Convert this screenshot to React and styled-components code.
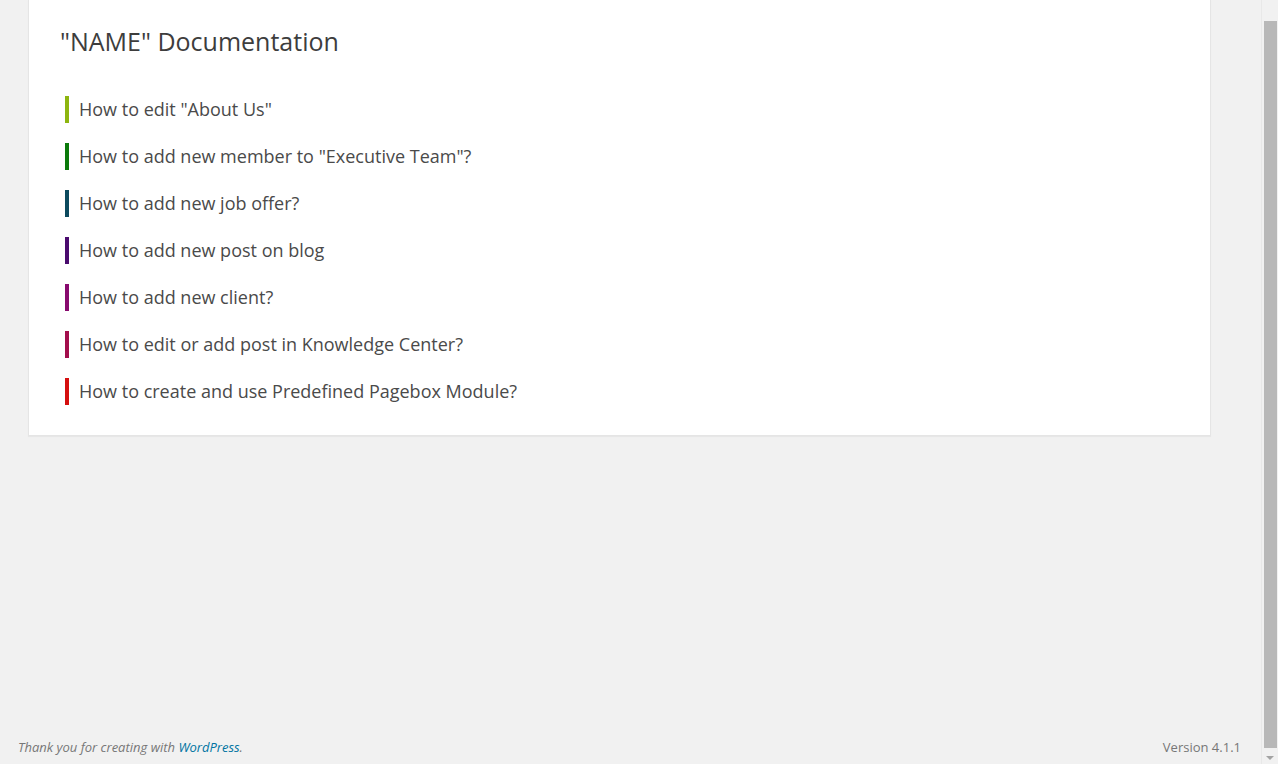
import React from "react";
import styled, { createGlobalStyle } from "styled-components";

const items = [
  { title: 'How to edit "About Us"', color: "#8db50f" },
  { title: 'How to add new member to "Executive Team"?', color: "#0b7a0b" },
  { title: "How to add new job offer?", color: "#0c4a5e" },
  { title: "How to add new post on blog", color: "#4a0b6e" },
  { title: "How to add new client?", color: "#880a6e" },
  { title: "How to edit or add post in Knowledge Center?", color: "#a30e4c" },
  { title: "How to create and use Predefined Pagebox Module?", color: "#d50f0f" },
];

const App = () => {
  return (
    <Page>
      <GlobalStyle />
      <Main>
        <Card>
          <Title>"NAME" Documentation</Title>
          <List>
            {items.map((item, index) => (
              <Item key={index} $color={item.color}>
                <a href="#">{item.title}</a>
              </Item>
            ))}
          </List>
        </Card>
        <Footer>
          <Thanks>
            Thank you for creating with <a href="#">WordPress</a>.
          </Thanks>
          <Version>Version 4.1.1</Version>
        </Footer>
      </Main>
      <Scrollbar>
        <Thumb />
        <Arrow />
      </Scrollbar>
    </Page>
  );
};

export default App;

const GlobalStyle = createGlobalStyle`
  html, body {
    margin: 0;
    padding: 0;
    background: #f1f1f1;
    overflow: hidden;
  }
  body {
    font-family: "Open Sans", "Liberation Sans", sans-serif;
    color: #444;
  }
`;

const Page = styled.div`
  display: flex;
  height: 764px;
  width: 1278px;
`;

const Main = styled.div`
  flex: 1;
  display: flex;
  flex-direction: column;
`;

const Card = styled.div`
  margin: 0 50px 0 28px;
  padding: 0 30px 30px 31px;
  background: #fff;
  box-shadow: 0 1px 1px rgba(0, 0, 0, 0.04);
  border: 1px solid #e5e5e5;
  border-top: none;
`;

const Title = styled.h2`
  margin: 0;
  padding: 24px 0 0;
  font-size: 25px;
  font-weight: 400;
  line-height: 34px;
  color: #3d3d3d;
`;

const List = styled.ul`
  list-style: none;
  margin: 38px 0 0;
  padding: 0 0 0 5px;
`;

const Item = styled.li`
  margin: 0 0 20px;
  border-left: 4px solid ${(p) => p.$color};
  padding-left: 10px;
  height: 27px;
  line-height: 27px;
  font-size: 18px;

  &:last-child {
    margin-bottom: 0;
  }

  a {
    color: #4a4a4a;
    text-decoration: none;
  }
`;

const Footer = styled.div`
  margin-top: auto;
  display: flex;
  justify-content: space-between;
  align-items: center;
  padding: 0 20px 7px 18px;
  font-size: 13px;
  line-height: 20px;
  color: #777;
`;

const Thanks = styled.span`
  font-style: italic;

  a {
    color: #0074a2;
    text-decoration: none;
  }
`;

const Version = styled.span``;

const Scrollbar = styled.div`
  width: 17px;
  position: relative;
  background: #f1f1f1;
  border-left: 1px solid #e8e8e8;
  box-sizing: border-box;
`;

const Thumb = styled.div`
  position: absolute;
  top: 21px;
  left: 2px;
  width: 13px;
  height: 727px;
  background: #b8b8b8;
`;

const Arrow = styled.div`
  position: absolute;
  bottom: 4px;
  left: 4px;
  width: 0;
  height: 0;
  border-left: 4px solid transparent;
  border-right: 4px solid transparent;
  border-top: 4px solid #a3a3a3;
`;
